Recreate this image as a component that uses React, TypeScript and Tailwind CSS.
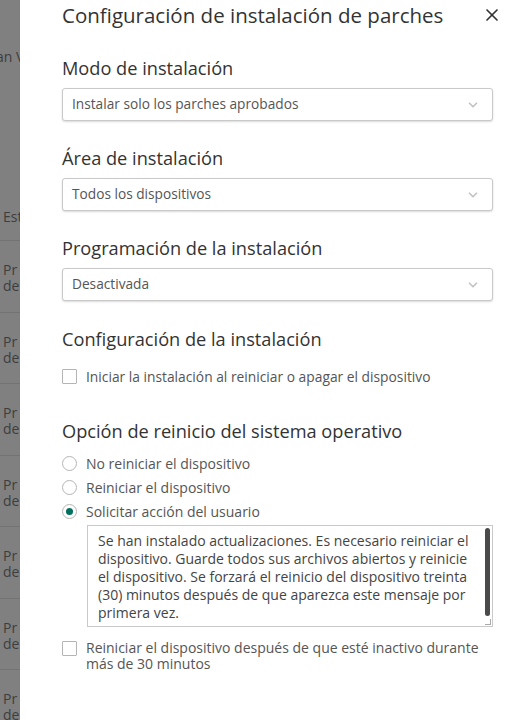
import { ChevronDown, X } from "lucide-react";

const font = { fontFamily: '"Open Sans", "Liberation Sans", sans-serif' };

const Select = ({ value }: { value: string }) => (
  <div className="flex h-[33px] items-center justify-between rounded-[3px] border border-[#c9c9c9] bg-white pl-[9px] pr-[12px] shadow-[0_1px_2px_rgba(0,0,0,0.15)]">
    <span className="text-[13.7px] text-[#555]">{value}</span>
    <ChevronDown className="h-3.5 w-3.5 text-[#c4c4c4]" strokeWidth={3} />
  </div>
);

const Heading = ({ children }: { children: React.ReactNode }) => (
  <h2 className="text-[18.2px] leading-[22px] text-[#333]">{children}</h2>
);

const Checkbox = () => (
  <span className="mt-[1px] h-[15px] w-[15px] shrink-0 rounded-[1px] border border-[#b5b5b5] bg-white" />
);

const Radio = ({ checked }: { checked?: boolean }) => (
  <span className="flex h-[15px] w-[15px] shrink-0 items-center justify-center rounded-full border border-[#b5b5b5] bg-white">
    {checked && <span className="h-[7px] w-[7px] rounded-full bg-[#00715e]" />}
  </span>
);

export default function App() {
  return (
    <div className="flex h-[720px] w-[518px] overflow-hidden bg-white" style={font}>
      {/* page behind the drawer, dimmed */}
      <div className="w-[20px] shrink-0 overflow-hidden bg-[#808080] text-[14px] text-[#3e3e3e]">
        <div className="w-[20px] whitespace-nowrap">
          <div className="-ml-[4px] pt-[47px] leading-[20px]">an V</div>
          <div className="pl-[3px] pt-[140px] leading-[20px]">Est</div>
          <div className="mt-[13px] border-t border-[#737373]" />
          {[0, 1, 2, 3, 4, 5, 6].map((i) => (
            <div key={i} className="h-[71.5px] border-b border-[#737373] pl-[3px] pt-[21px] leading-[16px]">
              <div>Pr</div>
              <div>de</div>
            </div>
          ))}
        </div>
      </div>

      {/* drawer */}
      <div className="flex-1 pl-[42px] pr-[25px] pt-[3px]">
        <div className="flex items-start justify-between">
          <h1 className="text-[20.5px] leading-[24px] text-[#333]">Configuración de instalación de parches</h1>
          <X className="-mr-[9px] mt-[2px] h-[20px] w-[20px] text-[#333]" strokeWidth={2} />
        </div>

        <div className="mt-[30px]">
          <Heading>Modo de instalación</Heading>
          <div className="mt-[9px]">
            <Select value="Instalar solo los parches aprobados" />
          </div>
        </div>

        <div className="mt-[26px]">
          <Heading>Área de instalación</Heading>
          <div className="mt-[9px]">
            <Select value="Todos los dispositivos" />
          </div>
        </div>

        <div className="mt-[26px]">
          <Heading>Programación de la instalación</Heading>
          <div className="mt-[9px]">
            <Select value="Desactivada" />
          </div>
        </div>

        <div className="mt-[27px]">
          <Heading>Configuración de la instalación</Heading>
          <label className="mt-[18px] flex items-start gap-[9px]">
            <Checkbox />
            <span className="text-[13.8px] leading-[17px] text-[#555]">Iniciar la instalación al reiniciar o apagar el dispositivo</span>
          </label>
        </div>

        <div className="mt-[35px]">
          <Heading>Opción de reinicio del sistema operativo</Heading>
          <div className="mt-[13px] flex flex-col gap-[7px]">
            <label className="flex items-center gap-[9px]">
              <Radio />
              <span className="text-[14px] leading-[17px] text-[#555]">No reiniciar el dispositivo</span>
            </label>
            <label className="flex items-center gap-[9px]">
              <Radio />
              <span className="text-[14px] leading-[17px] text-[#555]">Reiniciar el dispositivo</span>
            </label>
            <label className="flex items-center gap-[9px]">
              <Radio checked />
              <span className="text-[14px] leading-[17px] text-[#555]">Solicitar acción del usuario</span>
            </label>
          </div>
          <div className="relative ml-[25px] mt-[5px] h-[102px] border border-[#c9c9c9] bg-white pl-[10px] pr-[22px] pt-[6px]">
            <p className="text-[14px] leading-[18px] text-[#444]">
              Se han instalado actualizaciones. Es necesario reiniciar el dispositivo. Guarde todos sus archivos abiertos y reinicie el dispositivo. Se forzará el reinicio del dispositivo treinta (30) minutos después de que aparezca este mensaje por primera vez.
            </p>
            <div className="absolute right-[2px] top-[2px] h-[88px] w-[5px] rounded-full bg-[#4a4a4a]" />
            <div className="absolute bottom-[1px] right-[1px] h-[6px] w-[6px] border-b border-r border-[#aaa]" />
          </div>
          <label className="mt-[13px] flex items-start gap-[9px]">
            <Checkbox />
            <span className="text-[14px] leading-[16px] text-[#555]">
              Reiniciar el dispositivo después de que esté inactivo durante más de 30 minutos
            </span>
          </label>
        </div>
      </div>
    </div>
  );
}
